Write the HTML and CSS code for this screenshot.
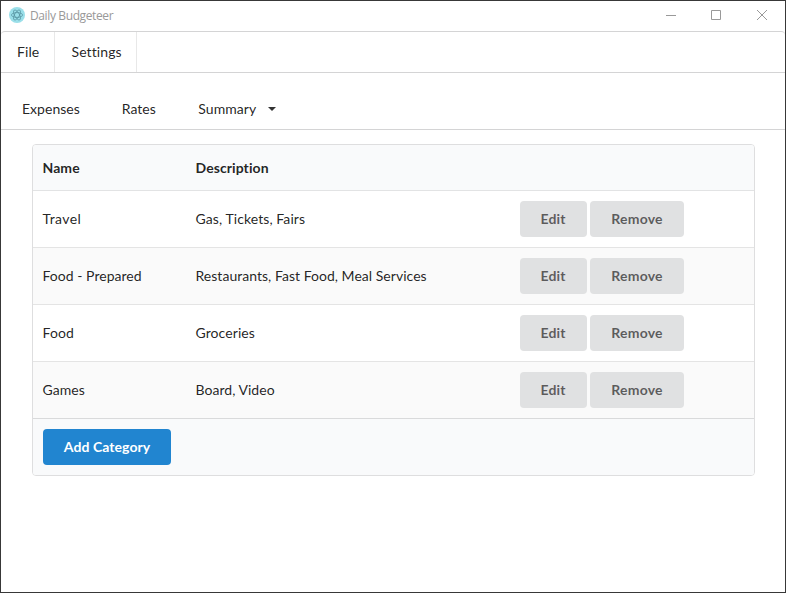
FILE: index.html
```html
<!DOCTYPE html>
<html lang="en">
<head>
<meta charset="utf-8">
<title>Daily Budgeteer</title>
<link rel="stylesheet" href="styles.css">
</head>
<body>
<div class="window">
  <header class="titlebar">
    <svg class="logo" viewBox="0 0 16 16"><circle cx="8" cy="8" r="8" fill="#9adfe9"/><g fill="none" stroke="#4a8593" stroke-width=".6"><ellipse cx="8" cy="8" rx="5.600" ry="2.400"/><ellipse cx="8" cy="8" rx="5.600" ry="2.400" transform="rotate(60 8 8)"/><ellipse cx="8" cy="8" rx="5.600" ry="2.400" transform="rotate(120 8 8)"/></g></svg>
    <span class="title">Daily Budgeteer</span>
    <div class="controls">
      <svg viewBox="0 0 46 30"><path d="M11 14.500h10"/></svg>
      <svg viewBox="0 0 46 30"><path d="M10.500 9.500h9v9h-9z"/></svg>
      <svg viewBox="0 0 46 30"><path d="M10 9l10 10m0-10l-10 10"/></svg>
    </div>
  </header>
  <nav class="menubar"><a>File</a><a>Settings</a></nav>
  <nav class="tabs"><a>Expenses</a><a>Rates</a><a>Summary<i class="caret"></i></a></nav>
  <main>
    <table>
      <colgroup><col class="c-name"><col class="c-desc"><col></colgroup>
      <thead><tr><th>Name</th><th>Description</th><th></th></tr></thead>
      <tbody>
        <tr><td class="wide">Travel</td><td>Gas, Tickets, Fairs</td><td><button>Edit</button><button class="remove">Remove</button></td></tr>
        <tr><td>Food - Prepared</td><td>Restaurants, Fast Food, Meal Services</td><td><button>Edit</button><button class="remove">Remove</button></td></tr>
        <tr><td>Food</td><td>Groceries</td><td><button>Edit</button><button class="remove">Remove</button></td></tr>
        <tr><td>Games</td><td>Board, Video</td><td><button>Edit</button><button class="remove">Remove</button></td></tr>
      </tbody>
      <tfoot><tr><td colspan="3"><button class="primary">Add Category</button></td></tr></tfoot>
    </table>
  </main>
</div>
</body>
</html>
```
FILE: styles.css
```css
* { box-sizing: border-box; }
body { margin: 0; font: 14px/18px Lato, sans-serif; color: rgba(0,0,0,.87); font-variant-ligatures: none; }
.window { height: 593px; border: 1px solid #383838; background: #fff; overflow: hidden; }
.titlebar { height: 30px; display: flex; align-items: center; padding-left: 8px; }
.logo { width: 16px; height: 16px; position: relative; top: -1px; }
.title { margin-left: 5px; font: 12px/16px "Open Sans", sans-serif; color: #999; letter-spacing: -.38px; }
.controls { margin-left: auto; margin-right: -8px; display: flex; }
.controls svg { width: 46px; height: 30px; fill: none; stroke: #999; }
.menubar { height: 42px; display: flex; border-top: 1px solid #d4d4d5; border-bottom: 1px solid #d4d4d5; border-radius: 4px 4px 0 0; }
.menubar a { width: 54px; padding: 11px 0 11px 16px; border-right: 1px solid #e8e8e8; letter-spacing: .1px; }
.menubar a + a { width: 82px; padding-left: 16.5px; }
.tabs { height: 57px; display: flex; padding: 27px 21px 0; gap: 42px; border-bottom: 1px solid #d4d4d5; }
.tabs a { display: flex; letter-spacing: .02px; }
.tabs a:last-child { margin-left: .4px; letter-spacing: .05px; }
.caret { margin: 7px 0 0 11.500px; width: 0; height: 0; border: 4px solid transparent; border-top-color: #333; border-bottom: 0; }
main { padding: 14px 30px 0 31px; }
table { width: 723px; table-layout: fixed; border: 1px solid #dededf; border-radius: 4px; border-collapse: separate; border-spacing: 0; overflow: hidden; }
.c-name { width: 153px; }
.c-desc { width: 324px; }
th, td { padding: 0 10px 0 9.5px; text-align: left; }
th { height: 46px; background: #f9fafb; border-bottom: 1px solid #e2e3e4; letter-spacing: .08px; }
tbody td { height: 57px; border-bottom: 1px solid #e4e4e4; letter-spacing: .03px; }
tbody tr:nth-child(odd) td { letter-spacing: .08px; }
tbody tr:nth-child(odd) td.wide { letter-spacing: .4px; }
tbody td:last-child, tfoot td { padding-left: 10px; }
tbody tr:last-child td { border-bottom-color: #d9dadb; }
tbody tr:nth-child(even) { background: #fafafa; }
tfoot td { height: 56px; background: #f9fafb; }
button { width: 67px; height: 36px; margin: 0 3px 0 0; padding: 0 1px 0 0; border: 0; border-radius: 4px; background: #e0e1e2; color: rgba(0,0,0,.6); font: bold 14px/14px Lato, sans-serif; font-variant-ligatures: none; letter-spacing: .1px; vertical-align: middle; }
.remove { width: 94px; padding: 0; letter-spacing: .18px; }
.primary { width: 128px; padding: 0; letter-spacing: .07px; background: #2185d0; color: #fff; }
```
